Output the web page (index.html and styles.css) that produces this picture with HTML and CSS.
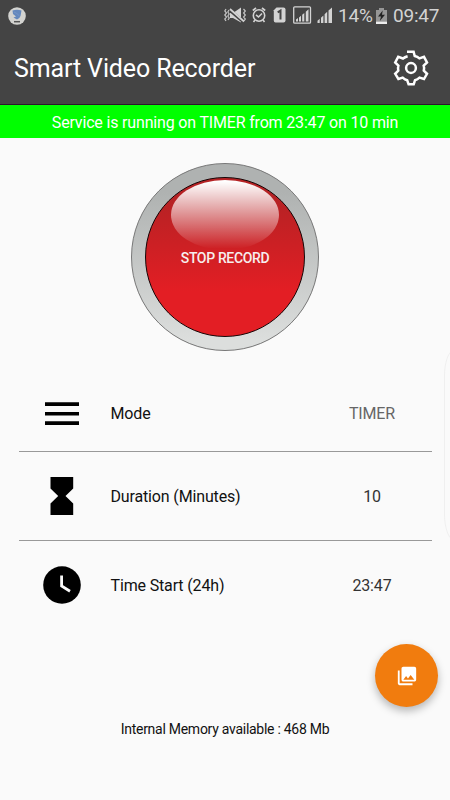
FILE: index.html
```html
<!DOCTYPE html>
<html lang="en">
<head>
    <meta charset="UTF-8">
    <meta name="viewport" content="width=device-width, initial-scale=1.0">
    <title>Smart Video Recorder</title>
    <link rel="stylesheet" href="styles.css">
</head>
<body>
    <div class="status-bar">
        <svg class="app-badge" width="18" height="18" viewBox="0 0 18 18">
            <circle cx="9" cy="9" r="8.8" fill="#d3d3d0"/>
            <path d="M4.500 3.5Q9 1.8 13.5 3.5L12.5 9Q11.5 12 9 12.5L5.5 10.5L8 9.5L5 7Z" fill="#6488bd"/>
            <path d="M6 5Q9 6 11.5 9" stroke="#7595c8" fill="none"/>
            <path d="M6 14.7H12" stroke="#555" stroke-width="1.5"/>
        </svg>
        <svg class="status-icons" width="110" height="20" viewBox="0 0 110 20" fill="#d3d3d3">
            <!-- vibrate / mute -->
            <path d="M6 7H9L17 1.5V16.5L9 12H6Z"/>
            <path d="M5 3.5L19 15.5" stroke="#444" stroke-width="3"/>
            <path d="M6 3L20 15.5" stroke="#d3d3d3" stroke-width="1.7"/>
            <path d="M2 3L.8 5L2.5 7L.8 9L2.5 11L.8 13L2 15M5 4L3.8 6L5.2 8L3.8 10L5.2 12L4 14M19.5 3L21.3 5L19.6 7L21.3 9L19.6 11L21.3 13L20 15" fill="none" stroke="#c5c5c5" stroke-width="1.2"/>
            <!-- alarm -->
            <g fill="none" stroke="#d3d3d3" stroke-width="1.6">
                <circle cx="35" cy="9.5" r="5.7"/>
                <path d="M28.8 4.5L32 2M41.2 4.5L38 2M31 14L29.5 16M39 14L40.5 16M32 8.8L34.5 11L38 7.5"/>
            </g>
            <!-- sim 1 -->
            <path d="M52.5 1.5H59.5Q61.5 1.5 61.5 3.5V14.5Q61.5 16.5 59.5 16.5H51.5Q49.8 16.5 49.8 14.5V4.3Z"/>
            <path d="M53.7 6.3L56.5 4.6V13.5" stroke="#444" stroke-width="2" fill="none"/>
            <!-- signals -->
            <rect x="69.7" y=".8" width="16.8" height="16.4" rx="1" fill="none" stroke="#d3d3d3" stroke-width="1.3"/>
            <path d="M72 15.5V13.5L74 12V15.5ZM75 15.5V11.5L77 9.8V15.5ZM78.2 15.5V8.8L80.3 7V15.5ZM81.8 15.5V5.8L84.5 3.3V15.5Z"/>
            <path d="M93.5 17V14.8L95.7 12.8V17ZM97 17V11.7L99.4 9.4V17ZM100.6 17V8.2L103.2 5.8V17ZM104.5 17V4.5L108 1.5V17Z"/>
        </svg>
        <span class="battery-text">14%</span>
        <svg class="battery" width="11" height="16" viewBox="0 0 11 16">
            <path d="M3 0H8V2H11V16H0V2H3Z" fill="#969696"/>
            <path d="M0 13.7H11V16H0Z" fill="#ededed"/>
            <path d="M6.7 2.5L2 8.5H5L3.8 13L9 6.8H6Z" fill="#222"/>
        </svg>
        <span class="clock">09:47</span>
    </div>

    <div class="toolbar">
        <h1 class="title">Smart Video Recorder</h1>
        <svg class="settings" width="36" height="36" viewBox="0 0 36 36" fill="none" stroke="#fff" stroke-width="2.5">
            <path d="M14.6 6.2Q11.8 7 10 8.5L5.2 6.8L2.2 12.5L5.4 15.7Q4.7 18 5.3 20.7L2.2 23.8L5.4 29L9.7 27.6Q12 29.7 14.2 30.3L15.6 34.3H20.7L22 30.3Q24.5 29.5 26.5 27.6L31 29L34 23.8L30.8 20.6Q31.5 18 30.7 15.6L34 12.4L31 6.8L26.4 8.4Q24.5 6.7 21.7 6L20.6 1.7H14"/>
            <circle cx="18" cy="18" r="4.9"/>
        </svg>
    </div>

    <div class="service-bar">Service is running on TIMER from 23:47 on 10 min</div>

    <div class="content">
        <button class="record" type="button">
            <span class="record-inner">
                <span class="gloss"></span>
                <span class="record-label">STOP RECORD</span>
            </span>
        </button>

        <div class="settings-list">
            <div class="row row-mode">
                <div class="row-icon">
                    <svg width="34" height="24" viewBox="0 0 34 24"><path d="M0 .3H34V4H0ZM0 9.9H34V13.5H0ZM0 19.3H34V23H0Z"/></svg>
                </div>
                <div class="row-label">Mode</div>
                <div class="row-value muted">TIMER</div>
            </div>
            <div class="row row-duration">
                <div class="row-icon">
                    <svg width="24" height="38" viewBox="0 0 24 38"><path d="M.5 0H23.2V11.5L15.5 19L23.2 26.5V38H.5V26.5L8.2 19L.5 11.5Z"/></svg>
                </div>
                <div class="row-label">Duration (Minutes)</div>
                <div class="row-value">10</div>
            </div>
            <div class="row row-start">
                <div class="row-icon">
                    <svg width="38" height="38" viewBox="0 0 38 38"><circle cx="19" cy="19" r="18.8"/><path d="M18.6 9.5V20L27 25.2" fill="none" stroke="#fafafa" stroke-width="2.8"/></svg>
                </div>
                <div class="row-label">Time Start (24h)</div>
                <div class="row-value">23:47</div>
            </div>
        </div>

        <p class="memory">Internal Memory available : 468 Mb</p>
    </div>

    <div class="edge-panel"></div>

    <button class="fab" type="button" aria-label="Gallery">
        <svg width="22" height="22" viewBox="0 0 24 24" fill="#fff">
            <path d="M22 16V4c0-1.100-.9-2-2-2H8c-1.100 0-2 .9-2 2v12c0 1.100.9 2 2 2h12c1.100 0 2-.9 2-2zm-11-4l2.030 2.710L16 11l4 5H8l3-4zM2 6v14c0 1.100.9 2 2 2h14v-2H4V6H2z"/>
        </svg>
    </button>
</body>
</html>
```
FILE: styles.css
```css
* {
    margin: 0;
    padding: 0;
    box-sizing: border-box;
}

body {
    position: relative;
    width: 450px;
    height: 800px;
    overflow: hidden;
    background-color: #fafafa;
    font-family: Roboto, "Liberation Sans", sans-serif;
    color: #111;
}

svg {
    display: block;
    flex: none;
}

/* top bars */
.status-bar {
    display: flex;
    align-items: center;
    height: 31px;
    padding: 0 11px 0 8px;
    background-color: #444;
    color: #d3d3d3;
    font-size: 19px;
    letter-spacing: -0.2px;
    white-space: nowrap;
}

.app-badge {
    margin-right: auto;
}

.status-icons {
    margin-right: 4px;
}

.battery-text {
    width: 34px;
}

.battery {
    margin: 0 6px 0 4px;
}

.clock {
    width: 46px;
}

.toolbar {
    display: flex;
    align-items: center;
    justify-content: space-between;
    height: 74px;
    padding: 0 21px 0 14px;
    background-color: #444;
    border-bottom: 1px solid #2c142c;
}

.title {
    padding-top: 2px;
    font-size: 25px;
    font-weight: 400;
    letter-spacing: -0.12px;
    color: #fff;
}

.service-bar {
    height: 33px;
    line-height: 35px;
    background-color: #00ff00;
    color: #fff;
    font-size: 16px;
    letter-spacing: -0.17px;
    text-align: center;
}

.content {
    display: flex;
    flex-direction: column;
    align-items: center;
    padding-top: 25px;
}

/* record button */
.record {
    width: 188px;
    height: 188px;
    padding: 13px;
    border: 1px solid #777;
    border-radius: 50%;
    background: linear-gradient(#afb2b1 15%, #dcdedd 95%);
    font-family: inherit;
}

.record-inner {
    position: relative;
    display: flex;
    align-items: center;
    justify-content: center;
    width: 160px;
    height: 160px;
    border: 1.5px solid #160405;
    border-radius: 50%;
    background: linear-gradient(#b52224 12%, #e31e24 72%);
}

.gloss {
    position: absolute;
    top: 2px;
    left: 25px;
    width: 108px;
    height: 70px;
    border-radius: 50%;
    background: linear-gradient(#fff 2%, rgba(255, 255, 255, 0) 98%);
}

.record-label {
    position: relative;
    padding-top: 2px;
    color: #f7eeee;
    font-size: 14px;
    font-weight: 500;
    letter-spacing: -0.35px;
}

/* settings rows */
.settings-list {
    width: 413px;
    margin-top: 25px;
}

.row {
    display: grid;
    grid-template-columns: 86px 1fr 119px;
    align-items: center;
    border-bottom: 1px solid #999;
    font-size: 16px;
    letter-spacing: -0.15px;
}

.row-mode {
    height: 76px;
}

.row-duration {
    height: 89px;
}

.row-start {
    height: 88px;
    border-bottom: none;
}

.row-icon {
    display: flex;
    justify-content: center;
}

.row-label {
    padding-left: 6px;
}

.row-value {
    text-align: center;
    color: #333;
}

.muted {
    color: #666;
}

.memory {
    margin-top: 92px;
    font-size: 14px;
    letter-spacing: -0.27px;
}

/* overlays */
.edge-panel {
    position: absolute;
    top: 350px;
    left: 444px;
    width: 20px;
    height: 190px;
    border: 1px solid #efefef;
    border-radius: 10px / 26px;
}

.fab {
    position: absolute;
    top: 644px;
    left: 375px;
    display: flex;
    align-items: center;
    justify-content: center;
    width: 63px;
    height: 63px;
    border: none;
    border-radius: 50%;
    background-color: #f17c0e;
    box-shadow: 0 4px 8px rgba(0, 0, 0, 0.28);
}
```
